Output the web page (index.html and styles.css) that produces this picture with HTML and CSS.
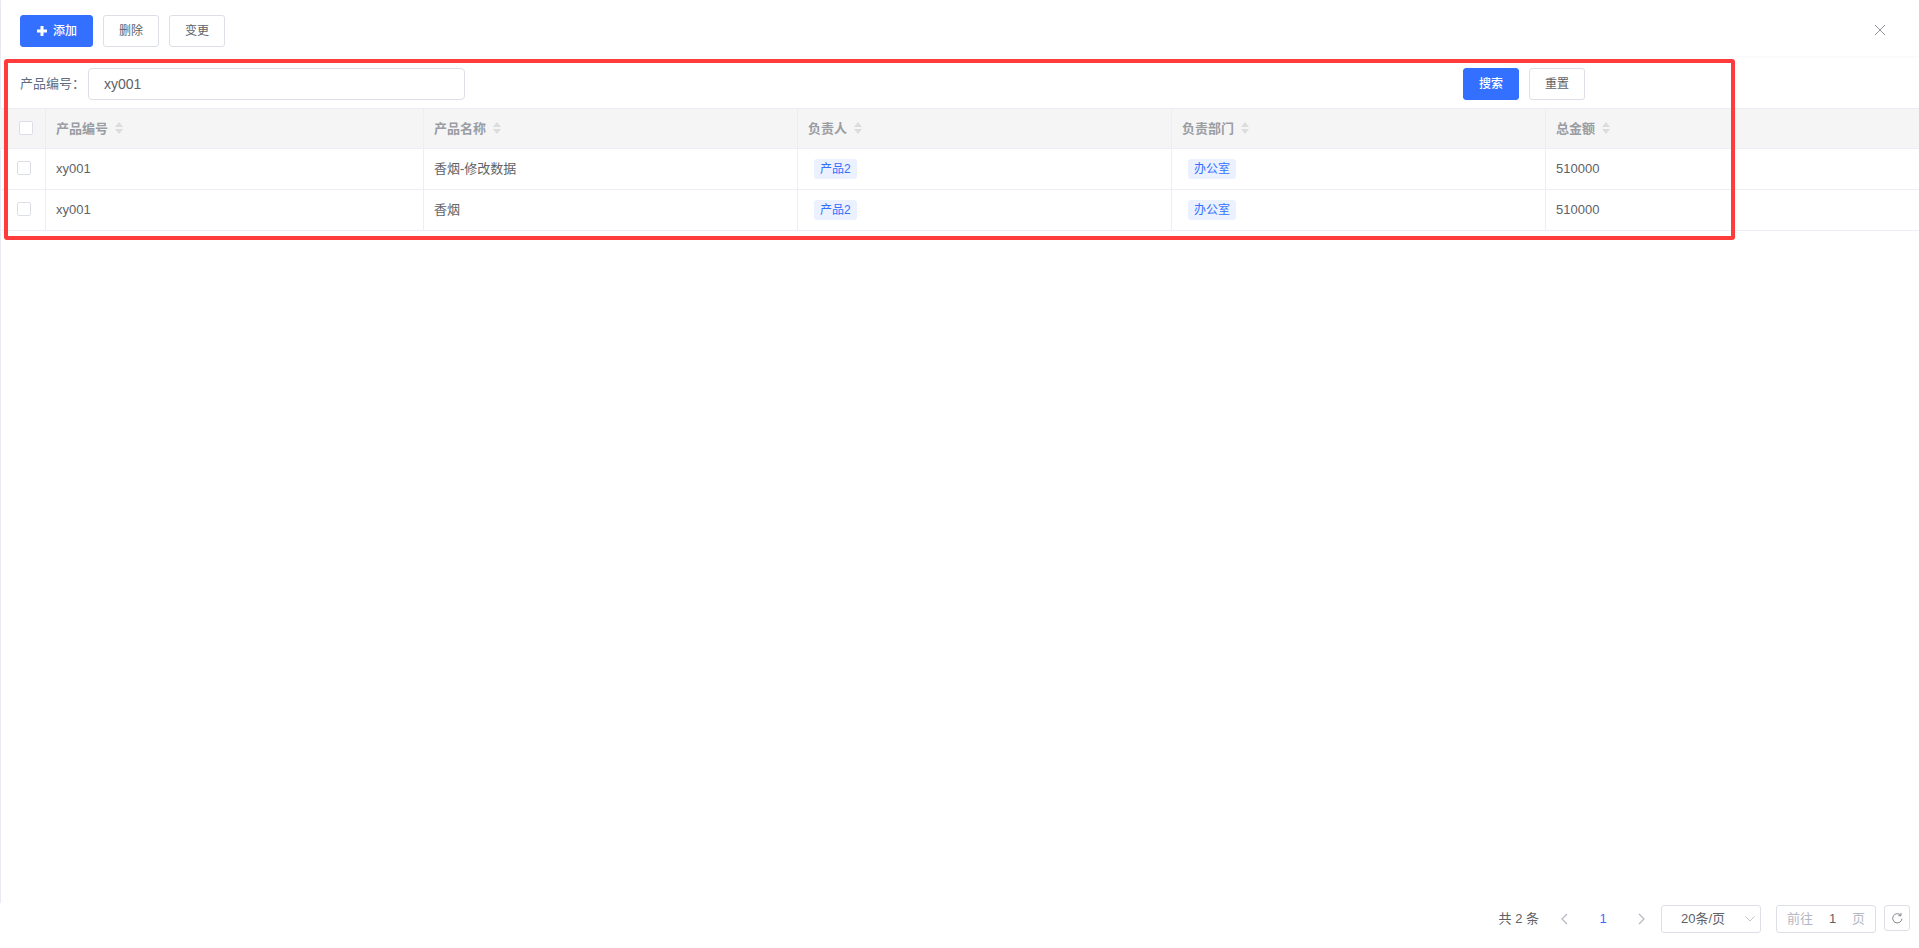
FILE: index.html
```html
<!DOCTYPE html>
<html lang="zh-CN">
<head>
<meta charset="utf-8">
<title>产品列表</title>
<link rel="stylesheet" href="styles.css">
</head>
<body>
<div class="page">
  <main class="panel">
    <header class="toolbar">
      <button class="btn btn-primary btn-add"><svg class="plus" viewBox="0 0 10 10" width="10" height="10"><path d="M3.500 0h3v3.500H10v3H6.500V10h-3V6.500H0v-3h3.500z" fill="#fff"/></svg>添加</button>
      <button class="btn">删除</button>
      <button class="btn">变更</button>
      <svg class="close" viewBox="0 0 12 12" width="12" height="12"><path d="M1 1l10 10M11 1L1 11" stroke="#8f939a" stroke-width="1" fill="none"/></svg>
    </header>
    <form class="search">
      <label class="search-label">产品编号：</label>
      <div class="input">xy001</div>
      <div class="search-actions">
        <button type="button" class="btn btn-primary">搜索</button>
        <button type="button" class="btn">重置</button>
      </div>
    </form>
    <div class="table">
      <div class="row head">
        <div class="cell check-cell"><span class="checkbox head-check"></span></div>
        <div class="cell">产品编号<svg class="sort" viewBox="0 0 8 12" width="8" height="12"><path d="M4 0l4 5H0zM4 12L0 7h8z" fill="#dcdcdc"/></svg></div>
        <div class="cell">产品名称<svg class="sort" viewBox="0 0 8 12" width="8" height="12"><path d="M4 0l4 5H0zM4 12L0 7h8z" fill="#dcdcdc"/></svg></div>
        <div class="cell">负责人<svg class="sort" viewBox="0 0 8 12" width="8" height="12"><path d="M4 0l4 5H0zM4 12L0 7h8z" fill="#dcdcdc"/></svg></div>
        <div class="cell">负责部门<svg class="sort" viewBox="0 0 8 12" width="8" height="12"><path d="M4 0l4 5H0zM4 12L0 7h8z" fill="#dcdcdc"/></svg></div>
        <div class="cell">总金额<svg class="sort" viewBox="0 0 8 12" width="8" height="12"><path d="M4 0l4 5H0zM4 12L0 7h8z" fill="#dcdcdc"/></svg></div>
      </div>
      <div class="row">
        <div class="cell check-cell"><span class="checkbox"></span></div>
        <div class="cell">xy001</div>
        <div class="cell">香烟-修改数据</div>
        <div class="cell"><span class="tag">产品2</span></div>
        <div class="cell"><span class="tag">办公室</span></div>
        <div class="cell">510000</div>
      </div>
      <div class="row">
        <div class="cell check-cell"><span class="checkbox"></span></div>
        <div class="cell">xy001</div>
        <div class="cell">香烟</div>
        <div class="cell"><span class="tag">产品2</span></div>
        <div class="cell"><span class="tag">办公室</span></div>
        <div class="cell">510000</div>
      </div>
    </div>
  </main>
  <footer class="pager">
    <span class="total">共 2 条</span>
    <svg class="chev chev-prev" viewBox="0 0 8 12" width="8" height="12"><path d="M7 1L2 6l5 5" stroke="#b4b8c0" stroke-width="1.2" fill="none"/></svg>
    <span class="current">1</span>
    <svg class="chev chev-next" viewBox="0 0 8 12" width="8" height="12"><path d="M1 1l5 5-5 5" stroke="#b4b8c0" stroke-width="1.2" fill="none"/></svg>
    <div class="size">20条/页<svg class="size-arrow" viewBox="0 0 10 6" width="10" height="6"><path d="M.5.500L5 5 9.500.500" stroke="#c4c7cf" stroke-width="1" fill="none"/></svg></div>
    <div class="goto"><span class="goto-muted">前往</span><span class="goto-num">1</span><span class="goto-muted">页</span></div>
    <button class="refresh"><svg viewBox="0 0 14 14" width="13" height="13"><path d="M11.800 7.200A5 5 0 1 1 10.300 3.200" stroke="#7b7f87" stroke-width="1" fill="none"/><path d="M10.800 1v3h-3" stroke="#7b7f87" stroke-width="1" fill="none"/></svg></button>
  </footer>
  <div class="highlight"></div>
</div>
</body>
</html>
```
FILE: styles.css
```css
* { box-sizing: border-box; }
html, body { margin: 0; height: 100%; }
body {
  background: #fff;
  color: #606266;
  font-family: "Liberation Sans", "Noto Sans CJK SC", sans-serif;
  font-size: 13px;
  line-height: 20px;
  overflow: hidden;
}
.page { position: relative; height: 948px; display: flex; flex-direction: column; }
.panel { height: 903px; border-left: 1px solid #e8ebf5; }

.toolbar {
  height: 56px;
  padding: 15px 0 0 19px;
  display: flex;
  align-items: flex-start;
  gap: 10px;
  box-shadow: 0 1px 3px rgba(0, 0, 0, .03);
}
.btn {
  width: 56px;
  height: 32px;
  padding: 0;
  border: 1px solid #dcdfe6;
  border-radius: 3px;
  background: #fff;
  color: #606266;
  font: 12px/20px "Liberation Sans", "Noto Sans CJK SC", sans-serif;
  display: inline-flex;
  align-items: center;
  justify-content: center;
}
.btn-primary { background: #3370ff; border-color: #3370ff; color: #fff; font-weight: 500; }
.btn-add { width: 73px; padding-left: 1px; gap: 6px; }
.close { margin: 9px 33px 0 auto; }

.search {
  height: 52px;
  padding: 12px 0 0 19px;
  display: flex;
  align-items: flex-start;
}
.search-label { width: 68px; line-height: 32px; color: #5e6d82; font-size: 13px; }
.input {
  width: 377px;
  height: 32px;
  padding: 0 15px;
  border: 1px solid #dcdfe6;
  border-radius: 4px;
  line-height: 30px;
  font-size: 14px;
}
.search-actions { margin-left: 998px; display: flex; gap: 10px; }

.table { margin-left: -1px; }
.row {
  display: grid;
  grid-template-columns: 46px 378px 374px 374px 374px 1fr;
  height: 41px;
  border-bottom: 1px solid #ebeef5;
}
.head { background: #f5f5f5; border-top: 1px solid #ebeef5; color: #9a9da3; font-weight: 600; }
.cell {
  padding-left: 10px;
  display: flex;
  align-items: center;
  border-right: 1px solid #ebeef5;
}
.cell:last-child { border-right: 0; }
.check-cell { padding-left: 17px; }
.checkbox {
  width: 14px;
  height: 14px;
  margin-bottom: 2px;
  border: 1px solid #dcdfe6;
  border-radius: 2px;
  background: #fff;
}
.head-check { margin: 0 0 1px 2px; }
.sort { margin: 0 0 1px 7px; }
.tag {
  margin-left: 6px;
  height: 20px;
  padding: 0 6px;
  border-radius: 3px;
  background: #ebf1ff;
  color: #3370ff;
  font-size: 12px;
  line-height: 20px;
}

.pager {
  height: 45px;
  padding: 2px 9px 0 0;
  display: flex;
  justify-content: flex-end;
  align-items: flex-start;
}
.total { line-height: 28px; }
.chev-prev { margin: 8px 0 0 21px; }
.current { width: 14px; margin-left: 28px; text-align: center; color: #3370ff; line-height: 28px; font-weight: 500; }
.chev-next { margin: 8px 0 0 28px; }
.size {
  width: 100px;
  height: 28px;
  margin-left: 15px;
  padding-left: 19px;
  border: 1px solid #dcdfe6;
  border-radius: 3px;
  line-height: 26px;
  display: flex;
  align-items: center;
}
.size-arrow { margin-left: 20px; }
.goto {
  width: 100px;
  height: 28px;
  margin-left: 15px;
  padding: 0 10px;
  border: 1px solid #dcdfe6;
  border-radius: 3px;
  line-height: 26px;
  display: flex;
  justify-content: space-between;
}
.goto-muted { color: #b4b8c4; }
.goto-num { color: #606266; }
.refresh {
  width: 26px;
  height: 26px;
  margin-left: 8px;
  padding: 0;
  border: 1px solid #dcdfe6;
  border-radius: 3px;
  background: #fff;
  display: flex;
  align-items: center;
  justify-content: center;
}

.highlight {
  position: absolute;
  left: 4px;
  top: 59px;
  width: 1731px;
  height: 181px;
  border: 4px solid #ff3b3b;
  border-radius: 3px;
  pointer-events: none;
}
```
